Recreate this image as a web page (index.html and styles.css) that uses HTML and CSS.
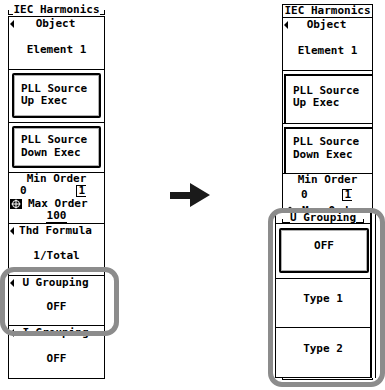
FILE: index.html
```html
<!DOCTYPE html>
<html>
<head>
<meta charset="utf-8">
<title>IEC Harmonics - U Grouping</title>
<link rel="stylesheet" href="styles.css">
</head>
<body>
<div class="screen">

	<div class="panel left">
		<div class="title"><span class="tick"></span><span class="ttext">IEC Harmonics</span><span class="tick tr"></span></div>
		<div class="frame">
			<div class="sec h53">
				<div class="label"><i class="tri"></i><span>Object</span></div>
				<div class="value">Element 1</div>
			</div>
			<div class="sec h53 btnsec"><div class="btn">PLL Source<br>Up Exec</div></div>
			<div class="sec h50 btnsec"><div class="btn">PLL Source<br>Down Exec</div></div>
			<div class="sec h51 order">
				<div class="center">Min Order</div>
				<div class="nums"><span>0</span><span class="cur">1</span></div>
				<div class="maxrow">
					<svg class="knob" width="12" height="10" viewBox="0 0 12 10"><rect width="12" height="10" fill="#000"/><circle cx="6" cy="5" r="3.5" fill="none" stroke="#fff" stroke-width="1"/><path d="M6 0.5V9.5M1.5 5H10.5" stroke="#fff" stroke-width="1"/></svg>
					<span>Max Order</span>
				</div>
				<div class="center"><span class="uline">100</span></div>
			</div>
			<div class="sec h52">
				<div class="label"><i class="tri"></i><span>Thd Formula</span></div>
				<div class="value">1/Total</div>
			</div>
			<div class="sec h50">
				<div class="label"><i class="tri"></i><span>U Grouping</span></div>
				<div class="value">OFF</div>
			</div>
			<div class="sec h53">
				<div class="label"><i class="tri"></i><span>I Grouping</span></div>
				<div class="value">OFF</div>
			</div>
		</div>
	</div>

	<div class="arrowcol">
		<svg width="40" height="24" viewBox="0 0 40 24"><path d="M0 9H20V0L40 12L20 24V16H0Z" fill="#1a1a1a"/></svg>
	</div>

	<div class="panel right">
		<div class="title boxed"><span class="ttext">IEC Harmonics</span></div>
		<div class="frame">
			<div class="sec h53">
				<div class="label"><i class="tri"></i><span>Object</span></div>
				<div class="value">Element 1</div>
			</div>
			<div class="sec h53 btnsec"><div class="btn pressed">PLL Source<br>Up Exec</div></div>
			<div class="sec h50 btnsec"><div class="btn pressed">PLL Source<br>Down Exec</div></div>
			<div class="sec h51 order">
				<div class="center">Min Order</div>
				<div class="nums nr"><span>0</span><span class="cur">1</span></div>
				<div class="maxrow mr">
					<svg class="knob" width="12" height="10" viewBox="0 0 12 10"><path d="M6 1L11 5L6 9L1 5Z" fill="none" stroke="#000"/></svg>
					<span>Max Order</span>
				</div>
			</div>
			<div class="sec h52"></div>
			<div class="sec h50"></div>
			<div class="sec h53"></div>
		</div>

		<div class="popup">
			<div class="title ptitle"><span class="tick"></span><span class="ttext">U Grouping</span><span class="tick tr"></span></div>
			<div class="prow psel"><div class="selbox">OFF</div></div>
			<div class="prow p49">Type 1</div>
			<div class="prow p51">Type 2</div>
		</div>
	</div>

	<div class="ring ring-left"></div>
	<div class="ring ring-right"></div>
</div>
</body>
</html>
```

FILE: styles.css
```css
html, body {
	margin: 0;
	background: #fff;
}

.screen {
	position: relative;
	width: 385px;
	height: 390px;
	display: flex;
	align-items: flex-start;
	padding: 4px 0 0 8px;
	box-sizing: border-box;
	font: bold 11px "DejaVu Sans Mono", monospace;
	color: #000;
}

.panel {
	position: relative;
	display: flex;
	flex-direction: column;
}
.panel.left { width: 97px; }
.panel.right { width: 91px; }

/* title line */
.title {
	display: flex;
	align-items: flex-end;
	height: 12px;
	line-height: 12px;
	white-space: pre;
}
.title .ttext { flex: none; }
.tick {
	flex: 1;
	height: 4px;
	border-left: 1px solid #000;
	border-bottom: 1px solid #000;
	margin-bottom: 1px;
}
.tick.tr {
	border-left: none;
	border-right: 1px solid #000;
}
.title.boxed {
	height: 12px;
	justify-content: center;
	border: 1px solid #000;
	border-bottom: none;
	align-items: center;
}

.frame {
	border: 1px solid #000;
	border-bottom: none;
}

.sec {
	display: flex;
	flex-direction: column;
	border-bottom: 1px solid #000;
	box-sizing: border-box;
	line-height: 12px;
}
.h50 { height: 50px; }
.h51 { height: 51px; }
.h52 { height: 52px; }
.h53 { height: 53px; }

.label {
	display: flex;
	align-items: center;
	height: 12px;
	margin-top: 1px;
}
.label span {
	flex: 1;
	text-align: center;
	margin-right: 7px;
	white-space: pre;
}
.tri {
	width: 0;
	height: 0;
	margin-left: 1px;
	border-right: 4px solid #000;
	border-top: 4px solid transparent;
	border-bottom: 4px solid transparent;
}
.value {
	margin: auto 0;
	text-align: center;
	white-space: pre;
}

/* exec buttons */
.btnsec { padding: 3px 3px 4px 3px; }
.btn {
	flex: 1;
	display: flex;
	flex-direction: column;
	justify-content: center;
	padding: 0 0 1px 7px;
	border: 2px solid #000;
	border-radius: 2px;
	box-shadow: inset 0 0 0 1px #b0b0b0;
	line-height: 12.5px;
}
.btn.pressed {
	border-right: none;
	border-bottom: none;
	border-radius: 0;
	box-shadow: none;
	margin: 0 -3px -4px -2px;
	padding: 0 0 5px 7px;
}

/* order block */
.order { line-height: 12px; }
.center { text-align: center; }
.nums {
	display: flex;
	justify-content: space-between;
	padding: 0 18px 0 11px;
}
.nums.nr { padding: 3px 20px 0 18px; }
.cur {
	border: 1px solid #000;
	border-right-width: 0;
	line-height: 10px;
	padding: 0 1px;
}
.maxrow {
	display: flex;
	align-items: center;
	gap: 6px;
	margin-top: 1px;
}
.maxrow.mr { margin-top: 4px; }
.knob { flex: none; margin-left: 1px; }
.uline {
	border-bottom: 1px solid #000;
	padding: 0 1px;
}

/* arrow between the two screens */
.arrowcol {
	width: 177px;
	flex: none;
	padding: 179px 0 0 65px;
	box-sizing: border-box;
}
.arrowcol svg { display: block; }

/* popup select list */
.popup {
	position: absolute;
	left: -7px;
	top: 208px;
	width: 97px;
	height: 166px;
	background: #fff;
	border-left: 1px solid #000;
	border-right: 2px solid #000;
	border-bottom: 1px solid #000;
	box-sizing: border-box;
	display: flex;
	flex-direction: column;
	box-shadow: 3px 0 0 #fff, 4px 0 0 #000;
}
.ptitle {
	flex: none;
	height: 10px;
	border-top: 1px solid #000;
	justify-content: center;
	line-height: 10px;
}
.ptitle .tick {
	border-left: 1px solid #000;
	margin: 0 0 0 6px;
	height: 3px;
}
.ptitle .tick.tr {
	border-left: none;
	margin: 0 6px 0 0;
}
.prow {
	border-top: 1px solid #000;
	display: flex;
	align-items: center;
	justify-content: center;
	box-sizing: border-box;
	white-space: pre;
	padding-bottom: 9px;
}
.psel {
	height: 55px;
	padding: 4px 1px 5px 3px;
	align-items: stretch;
}
.selbox {
	flex: 1;
	display: flex;
	align-items: center;
	justify-content: center;
	border: 2px solid #000;
	border-radius: 2px;
	box-shadow: inset 0 0 0 1px #b0b0b0;
	padding-bottom: 10px;
}
.p49 { height: 49px; }
.p51 { flex: 1; }

/* grey highlight rings laid over the screens */
.ring {
	position: absolute;
	border: 5px solid #8c8c8c;
	border-radius: 14px;
	box-sizing: border-box;
}
.ring-left {
	left: 0;
	top: 267px;
	width: 119px;
	height: 69px;
}
.ring-right {
	left: 268px;
	top: 208px;
	width: 117px;
	height: 179px;
}
```
